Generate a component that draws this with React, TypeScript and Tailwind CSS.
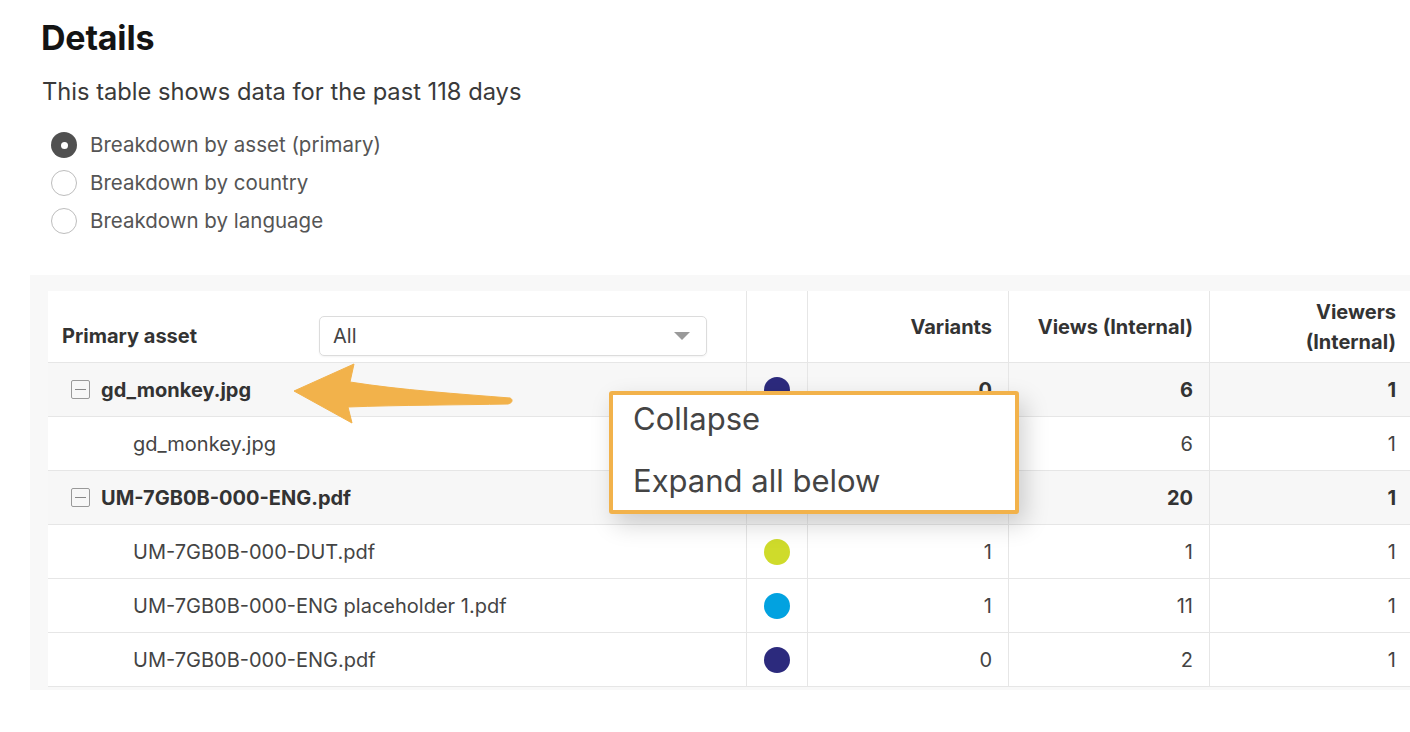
type Row = {
  name: string;
  group?: boolean;
  dot?: string;
  variants: number;
  views: number;
  viewers: number;
};

const rows: Row[] = [
  { name: "gd_monkey.jpg", group: true, dot: "#2c2a7d", variants: 0, views: 6, viewers: 1 },
  { name: "gd_monkey.jpg", dot: "#2c2a7d", variants: 0, views: 6, viewers: 1 },
  { name: "UM-7GB0B-000-ENG.pdf", group: true, variants: 2, views: 20, viewers: 1 },
  { name: "UM-7GB0B-000-DUT.pdf", dot: "#cfdb2b", variants: 1, views: 1, viewers: 1 },
  { name: "UM-7GB0B-000-ENG placeholder 1.pdf", dot: "#02a2e0", variants: 1, views: 11, viewers: 1 },
  { name: "UM-7GB0B-000-ENG.pdf", dot: "#2c2a7d", variants: 0, views: 2, viewers: 1 },
];

const options = ["Breakdown by asset (primary)", "Breakdown by country", "Breakdown by language"];

function MinusBox() {
  return (
    <span className="flex size-[19px] shrink-0 items-center justify-center rounded-[2px] border-[1.5px] border-[#999]">
      <span className="h-[1.5px] w-[11px] bg-[#888]" />
    </span>
  );
}

export default function App() {
  const cell = "border-r border-[#e6e6e6]";
  return (
    <div className="relative h-[732px] w-[1410px] overflow-hidden bg-white font-['Inter',sans-serif] text-[#444]">
      <div className="pl-[41px] pt-[18px]">
        <h1 className="text-[34px] font-bold leading-[40px] tracking-[-0.2px] text-[#141414]">Details</h1>
        <p className="ml-[1px] mt-[19px] text-[23.7px] leading-[30px] text-[#3a3a3a]">
          This table shows data for the past 118 days
        </p>
        <div className="mt-[25px] flex flex-col gap-[12px] pl-[10px]">
          {options.map((o, i) => (
            <label key={o} className="flex h-[26px] items-center gap-[13px] text-[20.5px] text-[#555]">
              {i === 0 ? (
                <span className="flex size-[26px] items-center justify-center rounded-full bg-[#505050]">
                  <span className="size-[7px] rounded-full bg-white" />
                </span>
              ) : (
                <span className="size-[26px] rounded-full border-[1.5px] border-[#bdbdbd] bg-white" />
              )}
              {o}
            </label>
          ))}
        </div>
      </div>

      <div className="ml-[30px] mt-[41px] h-[415px] overflow-hidden bg-[#f8f8f8] pl-[18px] pt-[16px]">
        <div className="w-[1380px] bg-white text-[20px]">
          <div className="flex h-[72px] border-b border-[#e6e6e6] font-bold text-[#333]">
            <div className={`${cell} flex w-[699px] items-end pb-[6px] pl-[14px] pr-[39px]`}>
              <span className="w-[257px] pb-[2px] leading-[36px]">Primary asset</span>
              <div className="flex h-[40px] flex-1 items-center justify-between rounded-[5px] border border-[#dcdcdc] pl-[13px] pr-[16px] font-normal text-[#444] shadow-[0_1px_2px_rgba(0,0,0,0.05)]">
                All
                <svg width="16" height="8" viewBox="0 0 16 8">
                  <path d="M0 0h16L8 8z" fill="#9a9a9a" />
                </svg>
              </div>
            </div>
            <div className={`${cell} w-[61px]`} />
            <div className={`${cell} flex w-[201px] items-center justify-end pr-[16px]`}>Variants</div>
            <div className={`${cell} flex w-[201px] items-center justify-end pr-[16px]`}>Views (Internal)</div>
            <div className="flex w-[201px] items-center justify-end pr-[15px] text-right leading-[30px]">
              Viewers
              <br />
              (Internal)
            </div>
          </div>
          {rows.map((r, i) => (
            <div
              key={i}
              className={`flex h-[54px] border-b border-[#e6e6e6] ${r.group ? "bg-[#f7f7f7] font-bold text-[#333]" : "bg-white"}`}
            >
              <div className={`${cell} flex w-[699px] items-center ${r.group ? "gap-[11px] pl-[23px]" : "pl-[85px]"}`}>
                {r.group && <MinusBox />}
                {r.name}
              </div>
              <div className={`${cell} flex w-[61px] items-center justify-center`}>
                {r.dot && <span className="size-[26px] rounded-full" style={{ background: r.dot }} />}
              </div>
              <div className={`${cell} flex w-[201px] items-center justify-end pr-[16px]`}>{r.variants}</div>
              <div className={`${cell} flex w-[201px] items-center justify-end pr-[16px]`}>{r.views}</div>
              <div className="flex w-[201px] items-center justify-end pr-[15px]">{r.viewers}</div>
            </div>
          ))}
        </div>
      </div>

      <svg className="absolute left-[290px] top-[360px]" width="230" height="70" viewBox="290 360 230 70">
        <path
          d="M294 391 L354 364 L350 382 C400 390 460 394 510 398 C513 399 513 403 508 404 C460 405 400 405 348 407 L352 423 Z"
          fill="#f2b24b"
          stroke="#f2b24b"
          strokeWidth="1"
          strokeLinejoin="round"
        />
      </svg>

      <div className="absolute left-[609px] top-[391px] flex h-[123px] w-[410px] flex-col justify-center gap-[22px] rounded-[3px] border-[4px] border-[#f2b24b] bg-white pl-[20px] text-[31px] leading-[40px] text-[#444] shadow-[6px_10px_24px_rgba(0,0,0,0.18)]">
        <div className="-mt-[6px]">Collapse</div>
        <div>Expand all below</div>
      </div>
    </div>
  );
}
